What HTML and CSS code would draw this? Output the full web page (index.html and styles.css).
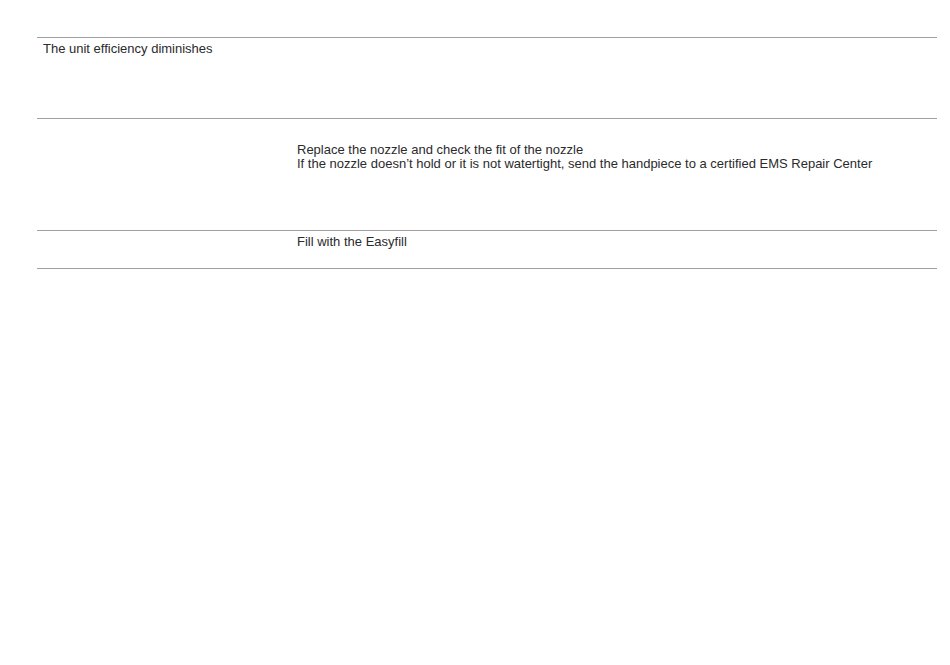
FILE: index.html
```html
<!DOCTYPE html>
<html lang="en">
<head>
  <meta charset="UTF-8" />
  <meta name="viewport" content="width=device-width, initial-scale=1.0"/>
  <title>Troubleshooting</title>
  <link rel="stylesheet" href="styles.css">
</head>
<body>

<div class="faults">
  <div class="row first">
    <div class="cell">The unit efficiency diminishes</div>
    <div class="cell"></div>
  </div>

  <div class="row second">
    <div class="cell"></div>
    <div class="cell">
      Replace the nozzle and check the fit of the nozzle<br>
      If the nozzle doesn’t hold or it is not watertight, send the handpiece to a certified EMS Repair Center
    </div>
  </div>

  <div class="row third">
    <div class="cell"></div>
    <div class="cell">Fill with the Easyfill</div>
  </div>
</div>

</body>
</html>
```

FILE: styles.css
```css
body {
  margin: 0;
  font-family: 'Liberation Sans', Arial, sans-serif;
  font-size: 13px;
  color: #2b2b2b;
  background: #fff;
}

.faults {
  width: 900px;
  margin: 37px 0 0 37px;
  border-bottom: 1px solid #a0a0a0;
}

.row {
  display: grid;
  grid-template-columns: 254px 1fr;
  border-top: 1px solid #a0a0a0;
}

.cell {
  padding: 4px 6px 3px;
  line-height: 14px;
}

.first {
  height: 80px;
}

.second {
  height: 111px;
}

.second .cell {
  padding-top: 24px;
}

.third {
  height: 37px;
}
```
